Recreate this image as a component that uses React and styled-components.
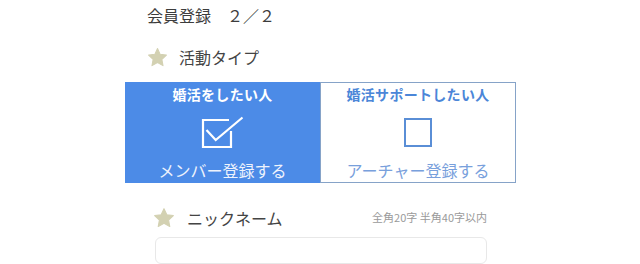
import styled, { createGlobalStyle } from 'styled-components';

const GlobalStyle = createGlobalStyle`
  html, body {
    margin: 0;
    padding: 0;
    background: #ffffff;
  }
  body {
    font-family: 'Noto Sans CJK JP', 'Noto Sans', sans-serif;
    color: #444444;
  }
`;

const Page = styled.div`
  width: 640px;
  height: 264px;
  overflow: hidden;
  display: flex;
  flex-direction: column;
  padding-top: 3px;
  box-sizing: border-box;
`;

const PageTitle = styled.div`
  margin-left: 147px;
  font-size: 16px;
  line-height: 24px;
  color: #3c3c3c;
`;

const Heading = styled.div`
  display: flex;
  align-items: center;
  gap: ${(p) => p.gap || 11}px;
  height: 24px;
  margin-left: ${(p) => p.left}px;
  margin-top: ${(p) => p.top}px;
  font-size: 16px;
  color: #444444;
`;

const HeadingRow = styled.div`
  display: flex;
  align-items: center;
  justify-content: space-between;
  width: 334px;
  margin-left: 153px;
  margin-top: 23px;
`;

const Note = styled.span`
  font-size: 11px;
  color: #9a9a9a;
  margin-top: -3px;
`;

const Choices = styled.div`
  display: grid;
  grid-template-columns: 195px 196px;
  width: 391px;
  height: 102px;
  margin: 13px 0 0 125px;
`;

const Choice = styled.div`
  display: flex;
  flex-direction: column;
  align-items: center;
  box-sizing: border-box;
  padding-top: ${(p) => (p.active ? 2 : 1)}px;
  background: ${(p) => (p.active ? '#4c8be7' : '#ffffff')};
  border: ${(p) => (p.active ? 'none' : '1px solid #86a3c8')};
  color: ${(p) => (p.active ? '#ffffff' : '#4b86d8')};
`;

const ChoiceTitle = styled.div`
  font-size: 14px;
  font-weight: 700;
  line-height: 20px;
  letter-spacing: 0.3px;
`;

const IconBox = styled.div`
  display: flex;
  align-items: center;
  justify-content: center;
  width: 44px;
  height: 38px;
  margin-top: 8px;
`;

const ChoiceLabel = styled.div`
  margin-top: 8px;
  font-size: 16px;
  line-height: 24px;
  color: ${(p) => (p.active ? '#eef3fc' : '#78a0dc')};
`;

const InputBox = styled.div`
  width: 332px;
  height: 50px;
  margin: 7px 0 0 155px;
  border: 1px solid #e8e8e8;
  border-radius: 6px;
  box-sizing: border-box;
  background: #ffffff;
`;

const Star = ({ size = 21 }) => (
  <svg width={size} height={size} viewBox="0 0 24 24">
    <path
      d="M12 1.8l3.1 6.6 7.1.9-5.2 4.9 1.3 7.1L12 17.8l-6.3 3.5 1.3-7.1-5.2-4.9 7.1-.9z"
      fill="#d3d1b2"
      stroke="#d3d1b2"
      strokeWidth="1.2"
      strokeLinejoin="round"
    />
  </svg>
);

const CheckedIcon = () => (
  <svg width="44" height="38" viewBox="0 0 44 38" fill="none">
    <path
      d="M28 8H2V35H30V19"
      stroke="#ffffff"
      strokeWidth="2.2"
      strokeLinejoin="miter"
    />
    <path
      d="M5.5 18L14.7 28L41.5 5.5"
      stroke="#ffffff"
      strokeWidth="2.2"
    />
  </svg>
);

const EmptyIcon = () => (
  <svg width="44" height="38" viewBox="0 0 44 38" fill="none">
    <rect x="9" y="7" width="26" height="27" stroke="#5a8ed6" strokeWidth="2" />
  </svg>
);

export default function App() {
  return (
    <>
      <GlobalStyle />
      <Page>
        <PageTitle>会員登録　２／２</PageTitle>
        <Heading left={147} top={18}>
          <Star />
          <span>活動タイプ</span>
        </Heading>
        <Choices>
          <Choice active>
            <ChoiceTitle>婚活をしたい人</ChoiceTitle>
            <IconBox>
              <CheckedIcon />
            </IconBox>
            <ChoiceLabel active>メンバー登録する</ChoiceLabel>
          </Choice>
          <Choice>
            <ChoiceTitle>婚活サポートしたい人</ChoiceTitle>
            <IconBox>
              <EmptyIcon />
            </IconBox>
            <ChoiceLabel>アーチャー登録する</ChoiceLabel>
          </Choice>
        </Choices>
        <HeadingRow>
          <Heading left={0} top={0} gap={12}>
            <Star size={22} />
            <span>ニックネーム</span>
          </Heading>
          <Note>全角20字 半角40字以内</Note>
        </HeadingRow>
        <InputBox />
      </Page>
    </>
  );
}
